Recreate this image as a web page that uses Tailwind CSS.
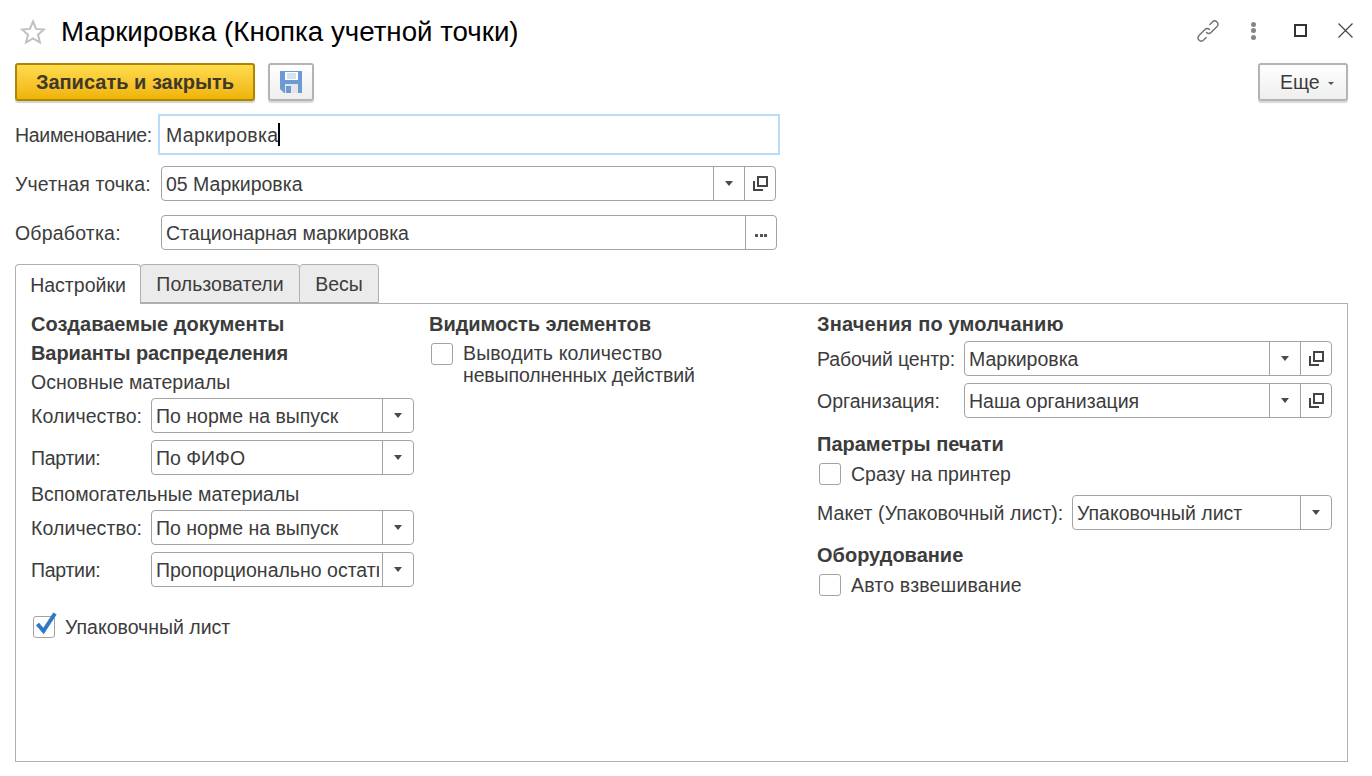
<!DOCTYPE html>
<html lang="ru">
<head>
    <meta charset="UTF-8">
    <title>Маркировка</title>
    <script src="https://cdn.jsdelivr.net/npm/@tailwindcss/browser@4"></script>
</head>
<body class="bg-white h-screen overflow-hidden font-['Liberation_Sans',Arial,sans-serif] text-[19.5px] leading-[22px] text-[#3c3c3c]">
<div class="w-[1372px] h-[776px] pl-[15px] pr-[24px] flex flex-col">

    <!-- Header -->
    <div class="h-[63px] flex items-center">
        <svg class="w-[26px] h-[26px] ml-[5px] mr-[15px]" viewBox="0 0 26 26" fill="none" stroke="#bcc1c6" stroke-width="2"><path d="M13 2.5l3.1 7.4 7.9.6-6 5.2 1.9 7.8-6.9-4.2-6.9 4.2 1.9-7.8-6-5.2 7.9-.6z"/></svg>
        <div class="text-[27.7px] leading-[34px] text-black">Маркировка (Кнопка учетной точки)</div>
        <div class="ml-auto mb-[2px] flex items-center">
            <svg class="w-[26px] h-[26px]" viewBox="0 0 26 26" fill="none" stroke="#6e6e6e" stroke-width="1.4" stroke-linecap="round"><path d="M11.5 14.5c1.5 1.4 3.2 1.2 4.5 0l6-6c1.4-1.5 1.4-3.3 0-4.6-1.3-1.3-3.2-1.3-4.6 0l-2.6 2.6"/><path d="M14.5 11.5c-1.5-1.4-3.2-1.2-4.5 0l-6 6c-1.4 1.5-1.4 3.3 0 4.6 1.3 1.3 3.2 1.3 4.6 0l2.6-2.6"/></svg>
            <div class="ml-[30px] flex flex-col gap-[1.5px]">
                <div class="w-[5px] h-[5px] rounded-full bg-[#858585]"></div>
                <div class="w-[5px] h-[5px] rounded-full bg-[#858585]"></div>
                <div class="w-[5px] h-[5px] rounded-full bg-[#858585]"></div>
            </div>
            <div class="ml-[38px] w-[13px] h-[13px] border-2 border-[#333]"></div>
            <svg class="ml-[31px] mr-[-5px] w-[15px] h-[15px]" viewBox="0 0 15 15" stroke="#444" stroke-width="1.2"><path d="M.5.5l14 14M14.5.5l-14 14"/></svg>
        </div>
    </div>

    <!-- Toolbar -->
    <div class="h-[38px] flex">
        <button class="w-[240px] h-[38px] rounded-[3px] border-2 border-[#ad8608] bg-gradient-to-b from-[#ffdb4a] to-[#efb400] font-bold text-[20px] text-[#40382a] shadow-[0_2px_1px_#d0d0d0]">Записать и закрыть</button>
        <button class="ml-[13px] w-[46px] h-[38px] rounded-[3px] border-2 border-[#b4b4b4] bg-gradient-to-b from-white to-[#eeeeee] shadow-[0_2px_1px_#d8d8d8] flex items-center justify-center">
            <svg class="w-[22px] h-[22px]" viewBox="0 0 22 22"><path d="M0 0h22v22H4l-4-4z" fill="#6b9bd2"/><path d="M5 1h13v8H5z" fill="#fff"/><path d="M7 3h9M7 5h9M7 7h9" stroke="#a9c4e4"/><path d="M5 13h13v9H5z" fill="#e2e6ea"/><path d="M6 15h5v7H6z" fill="#6b9bd2"/></svg>
        </button>
        <button class="ml-auto w-[90px] h-[38px] rounded-[3px] border-2 border-[#b4b4b4] bg-gradient-to-b from-white to-[#eeeeee] shadow-[0_2px_1px_#d8d8d8] flex items-center pl-[20px]">
            <span>Еще</span>
            <span class="ml-[8px] mt-[2px] border-x-[3.5px] border-t-[3.5px] border-x-transparent border-t-[#555]"></span>
        </button>
    </div>

    <!-- Main fields -->
    <div class="mt-[13px] h-[41px] flex items-center">
        <div class="w-[143px] tracking-[-0.28px]">Наименование:</div>
        <div class="w-[622px] h-[41px] border-2 border-[#b9ddf9] pl-[6px] flex items-center">
            <span class="tracking-[0.3px]">Маркировка</span><span class="w-[2px] h-[23px] bg-black"></span>
        </div>
    </div>
    <div class="mt-[11px] h-[35px] flex items-center">
        <div class="w-[146px] tracking-[0.14px]">Учетная точка:</div>
        <div class="w-[615px] h-[35px] border border-[#a3a3a3] rounded-[4px] flex">
            <div class="flex-1 pl-[4px] flex items-center">05 Маркировка</div>
            <div class="w-[31px] border-l border-[#a3a3a3] flex items-center justify-center"><span class="border-x-[4px] border-t-[5px] border-x-transparent border-t-[#4a4a4a]"></span></div>
            <div class="w-[31px] border-l border-[#a3a3a3] flex items-center justify-center">
                <svg class="w-[15px] h-[15px]" viewBox="0 0 15 15" fill="none" stroke="#444" stroke-width="2"><path d="M5 1h9v9H5z"/><path d="M1 5v9h9"/></svg>
            </div>
        </div>
    </div>
    <div class="mt-[14px] h-[35px] flex items-center">
        <div class="w-[146px] tracking-[0.2px]">Обработка:</div>
        <div class="w-[616px] h-[35px] border border-[#a3a3a3] rounded-[4px] flex">
            <div class="flex-1 pl-[4px] flex items-center">Стационарная маркировка</div>
            <div class="w-[31px] border-l border-[#a3a3a3] flex items-center justify-center gap-[1.5px] pt-[6px]">
                <span class="w-[3px] h-[3px] bg-[#555]"></span><span class="w-[3px] h-[3px] bg-[#555]"></span><span class="w-[3px] h-[3px] bg-[#555]"></span>
            </div>
        </div>
    </div>

    <!-- Tabs -->
    <div class="mt-[14px] h-[40px] flex relative z-10">
        <div class="w-[126px] h-[40px] border border-b-0 border-[#b0b0b0] rounded-t-[4px] bg-white flex items-center justify-center">Настройки</div>
        <div class="ml-[-1px] w-[160px] h-[39px] border border-[#b0b0b0] rounded-t-[4px] bg-[#ebebeb] flex items-center justify-center">Пользователи</div>
        <div class="ml-[-1px] w-[80px] h-[39px] border border-[#b0b0b0] rounded-t-[4px] bg-[#ebebeb] flex items-center justify-center">Весы</div>
    </div>

    <!-- Panel -->
    <div class="mt-[-1px] h-[459px] border border-[#b0b0b0] flex pl-[15px] pr-[15px] pt-[9px]">

        <div class="w-[383px] flex flex-col">
            <div class="h-[22px] font-bold text-[20px]">Создаваемые документы</div>
            <div class="mt-[7px] h-[22px] font-bold text-[20px] tracking-[-0.09px]">Варианты распределения</div>
            <div class="mt-[7px] h-[22px]">Основные материалы</div>
            <div class="mt-[5px] h-[35px] flex items-center">
                <div class="w-[120px] tracking-[0.09px]">Количество:</div>
                <div class="w-[263px] h-[35px] border border-[#a3a3a3] rounded-[4px] flex">
                    <div class="flex-1 pl-[4px] flex items-center">По норме на выпуск</div>
                    <div class="w-[31px] border-l border-[#a3a3a3] flex items-center justify-center"><span class="border-x-[4px] border-t-[5px] border-x-transparent border-t-[#4a4a4a]"></span></div>
                </div>
            </div>
            <div class="mt-[7px] h-[35px] flex items-center">
                <div class="w-[120px] tracking-[-0.28px]">Партии:</div>
                <div class="w-[263px] h-[35px] border border-[#a3a3a3] rounded-[4px] flex">
                    <div class="flex-1 pl-[4px] flex items-center">По ФИФО</div>
                    <div class="w-[31px] border-l border-[#a3a3a3] flex items-center justify-center"><span class="border-x-[4px] border-t-[5px] border-x-transparent border-t-[#4a4a4a]"></span></div>
                </div>
            </div>
            <div class="mt-[8px] h-[22px]">Вспомогательные материалы</div>
            <div class="mt-[5px] h-[35px] flex items-center">
                <div class="w-[120px] tracking-[0.09px]">Количество:</div>
                <div class="w-[263px] h-[35px] border border-[#a3a3a3] rounded-[4px] flex">
                    <div class="flex-1 pl-[4px] flex items-center">По норме на выпуск</div>
                    <div class="w-[31px] border-l border-[#a3a3a3] flex items-center justify-center"><span class="border-x-[4px] border-t-[5px] border-x-transparent border-t-[#4a4a4a]"></span></div>
                </div>
            </div>
            <div class="mt-[7px] h-[35px] flex items-center">
                <div class="w-[120px] tracking-[-0.28px]">Партии:</div>
                <div class="w-[263px] h-[35px] border border-[#a3a3a3] rounded-[4px] flex">
                    <div class="flex-1 min-w-0 ml-[4px] mr-[3px] flex items-center overflow-hidden whitespace-nowrap">Пропорционально остатков</div>
                    <div class="w-[31px] border-l border-[#a3a3a3] flex items-center justify-center"><span class="border-x-[4px] border-t-[5px] border-x-transparent border-t-[#4a4a4a]"></span></div>
                </div>
            </div>
            <div class="mt-[27px] h-[26px] flex items-center">
                <div class="relative ml-[2px] w-[22px] h-[22px] border border-[#a3a3a3] rounded-[3px]">
                    <svg class="absolute left-[1px] top-[-6px] w-[23px] h-[25px]" viewBox="0 0 23 25" fill="none" stroke="#2f79c4" stroke-width="4"><path d="M2.5 13l6 7L20 2.5"/></svg>
                </div>
                <div class="ml-[10px]">Упаковочный лист</div>
            </div>
        </div>

        <div class="ml-[15px] w-[372px] flex flex-col">
            <div class="h-[22px] font-bold text-[20px] tracking-[-0.05px]">Видимость элементов</div>
            <div class="mt-[7px] flex">
                <div class="ml-[2px] mt-[1px] w-[22px] h-[22px] border border-[#a3a3a3] rounded-[3px]"></div>
                <div class="ml-[10px]"><span class="tracking-[0.15px]">Выводить количество</span><br><span class="tracking-[-0.13px]">невыполненных действий</span></div>
            </div>
        </div>

        <div class="ml-[16px] w-[515px] flex flex-col">
            <div class="h-[22px] font-bold text-[20px] tracking-[0.18px]">Значения по умолчанию</div>
            <div class="mt-[6px] h-[35px] flex items-center">
                <div class="w-[147px] tracking-[-0.14px]">Рабочий центр:</div>
                <div class="w-[368px] h-[35px] border border-[#a3a3a3] rounded-[4px] flex">
                    <div class="flex-1 pl-[4px] flex items-center">Маркировка</div>
                    <div class="w-[31px] border-l border-[#a3a3a3] flex items-center justify-center"><span class="border-x-[4px] border-t-[5px] border-x-transparent border-t-[#4a4a4a]"></span></div>
                    <div class="w-[31px] border-l border-[#a3a3a3] flex items-center justify-center">
                        <svg class="w-[15px] h-[15px]" viewBox="0 0 15 15" fill="none" stroke="#444" stroke-width="2"><path d="M5 1h9v9H5z"/><path d="M1 5v9h9"/></svg>
                    </div>
                </div>
            </div>
            <div class="mt-[7px] h-[35px] flex items-center">
                <div class="w-[147px]">Организация:</div>
                <div class="w-[368px] h-[35px] border border-[#a3a3a3] rounded-[4px] flex">
                    <div class="flex-1 pl-[4px] flex items-center">Наша организация</div>
                    <div class="w-[31px] border-l border-[#a3a3a3] flex items-center justify-center"><span class="border-x-[4px] border-t-[5px] border-x-transparent border-t-[#4a4a4a]"></span></div>
                    <div class="w-[31px] border-l border-[#a3a3a3] flex items-center justify-center">
                        <svg class="w-[15px] h-[15px]" viewBox="0 0 15 15" fill="none" stroke="#444" stroke-width="2"><path d="M5 1h9v9H5z"/><path d="M1 5v9h9"/></svg>
                    </div>
                </div>
            </div>
            <div class="mt-[15px] h-[22px] font-bold text-[20px]">Параметры печати</div>
            <div class="mt-[8px] h-[22px] flex items-center">
                <div class="ml-[2px] w-[22px] h-[22px] border border-[#a3a3a3] rounded-[3px]"></div>
                <div class="ml-[10px]">Сразу на принтер</div>
            </div>
            <div class="mt-[10px] h-[35px] flex items-center">
                <div class="w-[255px] tracking-[0.08px]">Макет (Упаковочный лист):</div>
                <div class="w-[260px] h-[35px] border border-[#a3a3a3] rounded-[4px] flex">
                    <div class="flex-1 pl-[4px] flex items-center">Упаковочный лист</div>
                    <div class="w-[31px] border-l border-[#a3a3a3] flex items-center justify-center"><span class="border-x-[4px] border-t-[5px] border-x-transparent border-t-[#4a4a4a]"></span></div>
                </div>
            </div>
            <div class="mt-[14px] h-[22px] font-bold text-[20px]">Оборудование</div>
            <div class="mt-[8px] h-[22px] flex items-center">
                <div class="ml-[2px] w-[22px] h-[22px] border border-[#a3a3a3] rounded-[3px]"></div>
                <div class="ml-[10px] tracking-[0.18px]">Авто взвешивание</div>
            </div>
        </div>
    </div>
</div>
</body>
</html>
